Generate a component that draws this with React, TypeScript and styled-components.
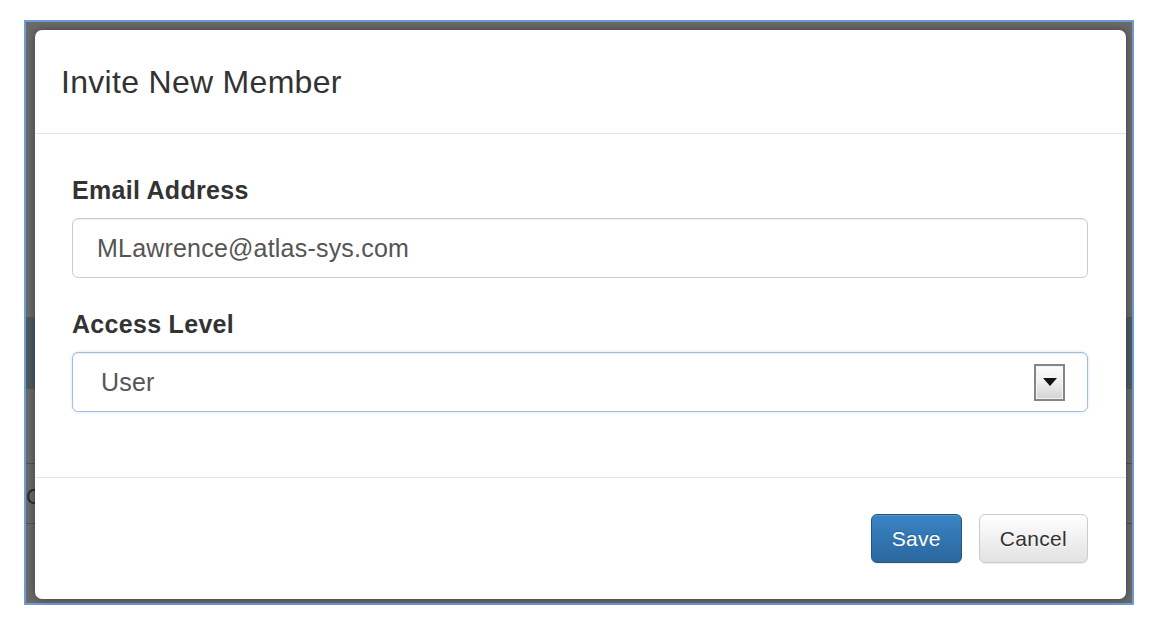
import React from 'react';
import styled, { createGlobalStyle } from 'styled-components';

const GlobalStyle = createGlobalStyle`
  html, body {
    margin: 0;
    padding: 0;
    background: #ffffff;
  }
  body {
    font-family: "Liberation Sans", Arial, Helvetica, sans-serif;
  }
`;

const App = () => {
  return (
    <>
      <GlobalStyle />
      <Page>
        <Frame>
          <PageBehind>C</PageBehind>
          <Modal>
            <ModalHeader>
              <ModalTitle>Invite New Member</ModalTitle>
            </ModalHeader>

            <ModalBody>
              <FormGroup>
                <Label htmlFor="email">Email Address</Label>
                <TextInput id="email" type="text" defaultValue="MLawrence@atlas-sys.com" />
              </FormGroup>

              <FormGroup $last>
                <Label htmlFor="access">Access Level</Label>
                <SelectBox id="access" role="combobox" tabIndex={0}>
                  <SelectValue>User</SelectValue>
                  <ArrowBox>
                    <svg width="14" height="8" viewBox="0 0 14 8">
                      <polygon points="0,0 14,0 7,8" fill="#111" />
                    </svg>
                  </ArrowBox>
                </SelectBox>
              </FormGroup>
            </ModalBody>

            <ModalFooter>
              <Button $variant="primary">Save</Button>
              <Button>Cancel</Button>
            </ModalFooter>
          </Modal>
        </Frame>
      </Page>
    </>
  );
};

export default App;

const Page = styled.div`
  padding: 20px 0 0 24px;
`;

// backdrop of the page under the dialog, with hints of the rows underneath
const Frame = styled.div`
  position: relative;
  box-sizing: border-box;
  width: 1110px;
  height: 585px;
  border: 2px solid #6e9cd8;
  padding: 8px 6px 4px 9px;
  background: linear-gradient(
    to bottom,
    #6a6a6a 0,
    #6a6a6a 295px,
    #4e5960 295px,
    #4e5960 367px,
    #6a6a6a 367px,
    #6a6a6a 441px,
    #505050 441px,
    #505050 442px,
    #6a6a6a 442px,
    #6a6a6a 501px,
    #505050 501px,
    #505050 502px,
    #6a6a6a 502px
  );
`;

const PageBehind = styled.span`
  position: absolute;
  left: 0;
  top: 462px;
  font-size: 22px;
  color: #25283a;
`;

const Modal = styled.div`
  position: relative;
  z-index: 1;
  display: flex;
  flex-direction: column;
  height: 100%;
  background: #ffffff;
  border-radius: 7px;
  box-shadow: 0 0 8px rgba(0, 0, 0, 0.4);
`;

const ModalHeader = styled.div`
  padding: 34px 26px 33px;
  border-bottom: 1px solid #e5e5e5;
`;

const ModalTitle = styled.h4`
  margin: 0;
  font-size: 32px;
  line-height: 36px;
  font-weight: 400;
  letter-spacing: 0.3px;
  color: #333333;
`;

const ModalBody = styled.div`
  padding: 42px 38px 65px 37px;
`;

const FormGroup = styled.div<{ $last?: boolean }>`
  margin-bottom: ${({ $last }) => ($last ? 0 : 32)}px;
`;

const Label = styled.label`
  display: block;
  margin-bottom: 14px;
  font-size: 25px;
  line-height: 28px;
  font-weight: 700;
  letter-spacing: 0.3px;
  color: #333333;
`;

const TextInput = styled.input`
  display: block;
  box-sizing: border-box;
  width: 100%;
  height: 60px;
  margin: 0;
  padding: 0 24px;
  border: 1px solid #cccccc;
  border-radius: 6px;
  box-shadow: inset 0 1px 1px rgba(0, 0, 0, 0.075);
  font-family: inherit;
  font-size: 25px;
  letter-spacing: 0.2px;
  color: #555555;
  background: #ffffff;
  outline: none;
`;

const SelectBox = styled.div`
  display: flex;
  align-items: center;
  justify-content: space-between;
  box-sizing: border-box;
  height: 60px;
  padding: 0 22px 0 28px;
  border: 1px solid #9fc0e4;
  border-radius: 6px;
  box-shadow: inset 0 1px 1px rgba(0, 0, 0, 0.075), 0 0 3px rgba(102, 175, 233, 0.35);
  background: #ffffff;
  outline: none;
`;

const SelectValue = styled.span`
  font-size: 25px;
  letter-spacing: 0.2px;
  color: #555555;
`;

const ArrowBox = styled.span`
  display: flex;
  align-items: center;
  justify-content: center;
  box-sizing: border-box;
  width: 31px;
  height: 37px;
  border: 2px solid #858585;
  background: linear-gradient(to bottom, #fcfcfc 0%, #f0f0f0 45%, #d4d4d4 100%);
  box-shadow: inset 0 0 0 1px #f4f4f4;
`;

const ModalFooter = styled.div`
  display: flex;
  justify-content: flex-end;
  gap: 17px;
  padding: 36px 38px 36px;
  border-top: 1px solid #e5e5e5;
`;

const Button = styled.button<{ $variant?: 'primary' }>`
  box-sizing: border-box;
  height: 49px;
  margin: 0;
  padding: 0 20px;
  border-radius: 6px;
  font-family: inherit;
  font-size: 21px;
  letter-spacing: 0.3px;
  cursor: pointer;
  box-shadow: inset 0 1px 0 rgba(255, 255, 255, 0.15), 0 1px 1px rgba(0, 0, 0, 0.075);
  border: 1px solid ${({ $variant }) => ($variant === 'primary' ? '#245580' : '#cccccc')};
  color: ${({ $variant }) => ($variant === 'primary' ? '#ffffff' : '#333333')};
  text-shadow: ${({ $variant }) =>
    $variant === 'primary' ? '0 -1px 0 rgba(0, 0, 0, 0.2)' : '0 1px 0 #ffffff'};
  background: ${({ $variant }) =>
    $variant === 'primary'
      ? 'linear-gradient(to bottom, #3a84c5 0%, #2a679f 100%)'
      : 'linear-gradient(to bottom, #ffffff 0%, #e2e2e2 100%)'};
`;
